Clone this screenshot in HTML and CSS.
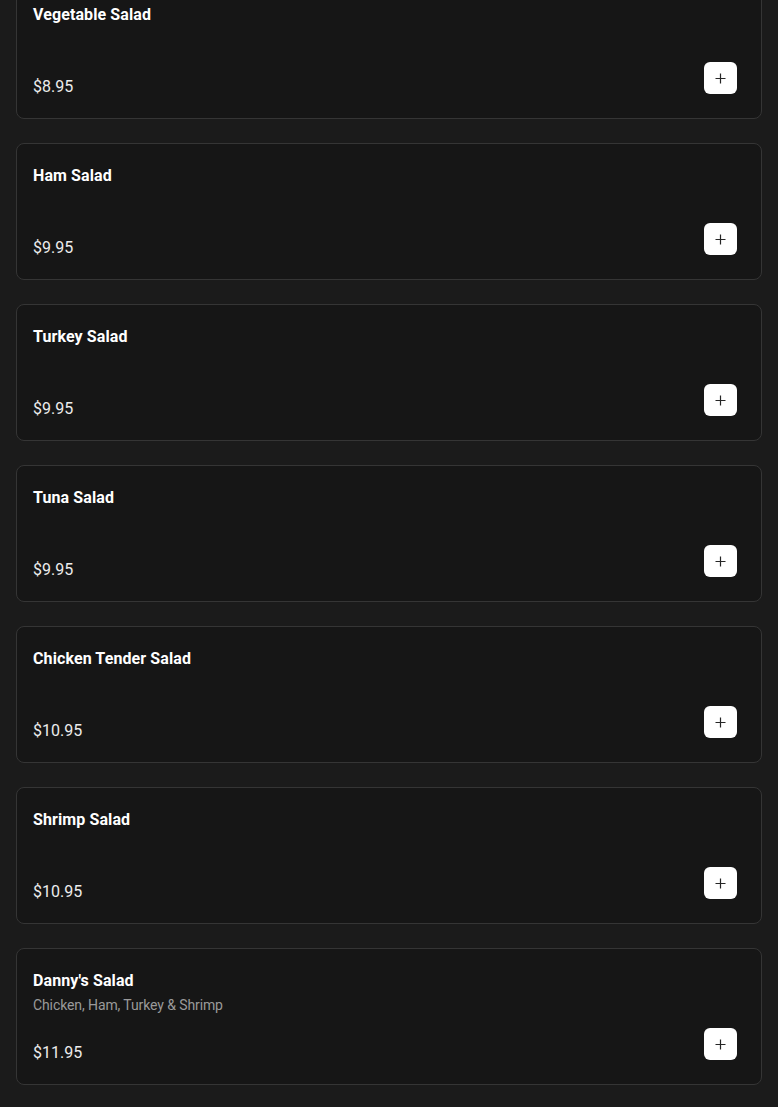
FILE: index.html
```html
<!DOCTYPE html>
<html lang="en">
<head>
<meta charset="UTF-8">
<meta name="viewport" content="width=device-width, initial-scale=1.0">
<title>Salads</title>
<link rel="stylesheet" href="styles.css">
</head>
<body>
<div class="menu-list">

  <div class="item-card">
    <div class="item-name">Vegetable Salad</div>
    <div class="item-footer">
      <span class="item-price">$8.95</span>
      <button type="button" class="add-btn" aria-label="Add Vegetable Salad">
        <svg width="11" height="11" viewBox="0 0 11 11"><path d="M5.5 0.5v10M0.5 5.5h10" stroke="#262626" stroke-width="1.2"/></svg>
      </button>
    </div>
  </div>

  <div class="item-card">
    <div class="item-name">Ham Salad</div>
    <div class="item-footer">
      <span class="item-price">$9.95</span>
      <button type="button" class="add-btn" aria-label="Add Ham Salad">
        <svg width="11" height="11" viewBox="0 0 11 11"><path d="M5.5 0.5v10M0.5 5.5h10" stroke="#262626" stroke-width="1.2"/></svg>
      </button>
    </div>
  </div>

  <div class="item-card">
    <div class="item-name">Turkey Salad</div>
    <div class="item-footer">
      <span class="item-price">$9.95</span>
      <button type="button" class="add-btn" aria-label="Add Turkey Salad">
        <svg width="11" height="11" viewBox="0 0 11 11"><path d="M5.5 0.5v10M0.5 5.5h10" stroke="#262626" stroke-width="1.2"/></svg>
      </button>
    </div>
  </div>

  <div class="item-card">
    <div class="item-name">Tuna Salad</div>
    <div class="item-footer">
      <span class="item-price">$9.95</span>
      <button type="button" class="add-btn" aria-label="Add Tuna Salad">
        <svg width="11" height="11" viewBox="0 0 11 11"><path d="M5.5 0.5v10M0.5 5.5h10" stroke="#262626" stroke-width="1.2"/></svg>
      </button>
    </div>
  </div>

  <div class="item-card">
    <div class="item-name">Chicken Tender Salad</div>
    <div class="item-footer">
      <span class="item-price">$10.95</span>
      <button type="button" class="add-btn" aria-label="Add Chicken Tender Salad">
        <svg width="11" height="11" viewBox="0 0 11 11"><path d="M5.5 0.5v10M0.5 5.5h10" stroke="#262626" stroke-width="1.2"/></svg>
      </button>
    </div>
  </div>

  <div class="item-card">
    <div class="item-name">Shrimp Salad</div>
    <div class="item-footer">
      <span class="item-price">$10.95</span>
      <button type="button" class="add-btn" aria-label="Add Shrimp Salad">
        <svg width="11" height="11" viewBox="0 0 11 11"><path d="M5.5 0.5v10M0.5 5.5h10" stroke="#262626" stroke-width="1.2"/></svg>
      </button>
    </div>
  </div>

  <div class="item-card">
    <div class="item-name">Danny's Salad</div>
    <div class="item-desc">Chicken, Ham, Turkey &amp; Shrimp</div>
    <div class="item-footer">
      <span class="item-price">$11.95</span>
      <button type="button" class="add-btn" aria-label="Add Danny's Salad">
        <svg width="11" height="11" viewBox="0 0 11 11"><path d="M5.5 0.5v10M0.5 5.5h10" stroke="#262626" stroke-width="1.2"/></svg>
      </button>
    </div>
  </div>

</div>
</body>
</html>
```

FILE: styles.css
```css
body {
  font-family: Roboto, 'Liberation Sans', sans-serif;
  background-color: #1b1b1b;
  color: #ffffff;
  margin: 0;
}
.menu-list {
  display: flex;
  flex-direction: column;
  gap: 24px;
  padding: 0 16px 23px;
  margin-top: -18px;
}
.item-card {
  display: flex;
  flex-direction: column;
  box-sizing: border-box;
  min-height: 137px;
  padding: 21px 24px 24px 16px;
  background-color: #161616;
  border: 1px solid #353535;
  border-radius: 8px;
}
.item-name {
  font-size: 16px;
  font-weight: 700;
  line-height: 22px;
  letter-spacing: 0.1px;
}
.item-desc {
  margin-top: 3px;
  font-size: 14px;
  line-height: 20px;
  color: #9a9a9a;
  letter-spacing: -0.1px;
}
.item-footer {
  margin-top: auto;
  display: flex;
  justify-content: space-between;
  align-items: flex-end;
}
.item-price {
  font-size: 16px;
  line-height: 14px;
  color: #ececec;
}
.add-btn {
  width: 33px;
  height: 32px;
  padding: 0;
  border: none;
  border-radius: 6px;
  background-color: #ffffff;
  display: flex;
  align-items: center;
  justify-content: center;
  cursor: pointer;
}
```
